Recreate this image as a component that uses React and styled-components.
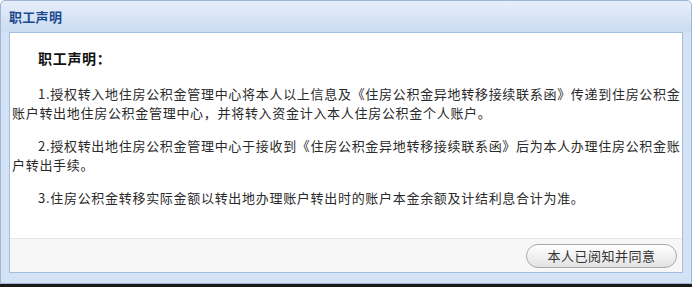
import React from 'react';
import { styled, createGlobalStyle } from 'styled-components';

const GlobalStyle = createGlobalStyle`
	html, body {
		margin: 0;
		padding: 0;
		background: #fff;
	}
	body {
		font-family: "Noto Sans CJK SC", "Noto Sans", sans-serif;
	}
`;

const paragraphs = [
	'1.授权转入地住房公积金管理中心将本人以上信息及《住房公积金异地转移接续联系函》传递到住房公积金账户转出地住房公积金管理中心，并将转入资金计入本人住房公积金个人账户。',
	'2.授权转出地住房公积金管理中心于接收到《住房公积金异地转移接续联系函》后为本人办理住房公积金账户转出手续。',
	'3.住房公积金转移实际金额以转出地办理账户转出时的账户本金余额及计结利息合计为准。',
];

const App = () => {
	return (
		<>
			<GlobalStyle />
			<Page>
				<Window>
					<Header>
						<Title>职工声明</Title>
					</Header>
					<Body>
						<Content>
							<Heading>职工声明：</Heading>
							{paragraphs.map((text) => (
								<Paragraph key={text}>{text}</Paragraph>
							))}
						</Content>
						<Footer>
							<AgreeButton type="button">本人已阅知并同意</AgreeButton>
						</Footer>
					</Body>
				</Window>
			</Page>
		</>
	);
};

const Page = styled.div`
	width: 692px;
	height: 287px;
	box-sizing: border-box;
	border-bottom: 3px solid #1a1a1a;
`;

const Window = styled.div`
	box-sizing: border-box;
	height: 284px;
	display: flex;
	flex-direction: column;
	border: 1px solid #9fb6d6;
	border-radius: 5px 5px 0 0;
	padding: 0 8px 10px 8px;
	background: linear-gradient(
		to bottom,
		#e6eefa 0px,
		#cbdbf1 31px,
		#d3e2f5 31px,
		#d3e2f5 100%
	);
`;

const Header = styled.div`
	height: 31px;
	display: flex;
	align-items: center;
	flex-shrink: 0;
`;

const Title = styled.span`
	font-size: 13px;
	font-weight: bold;
	color: #1d4a8f;
	letter-spacing: 0.3px;
`;

const Body = styled.div`
	flex: 1;
	display: flex;
	flex-direction: column;
	background: #fff;
	border: 1px solid #a3bde0;
`;

const Content = styled.div`
	flex: 1;
	padding: 15px 0 0 2px;
	color: #2a2a2a;
	font-size: 13px;
	letter-spacing: 0.7px;
`;

const Heading = styled.div`
	font-weight: bold;
	font-size: 14px;
	line-height: 20px;
	padding-left: 26px;
	margin-bottom: 16px;
	color: #111;
`;

const Paragraph = styled.p`
	margin: 0 0 14px 0;
	line-height: 19px;
	text-indent: 26px;

	&:last-child {
		margin-bottom: 0;
	}
`;

const Footer = styled.div`
	height: 33px;
	flex-shrink: 0;
	display: flex;
	align-items: center;
	justify-content: flex-end;
	padding-right: 5px;
	background: #f7f7f7;
	border-top: 1px solid #e6e6e6;
`;

const AgreeButton = styled.button`
	width: 151px;
	height: 24px;
	border-radius: 12px;
	border: 1px solid #a9a9a9;
	background: linear-gradient(to bottom, #ffffff 0%, #f1f1f1 50%, #e2e2e2 100%);
	font-family: "Noto Sans CJK SC", "Noto Sans", sans-serif;
	font-size: 13px;
	color: #333;
	letter-spacing: 0.5px;
	padding: 0;
	cursor: pointer;
`;

export default App;
